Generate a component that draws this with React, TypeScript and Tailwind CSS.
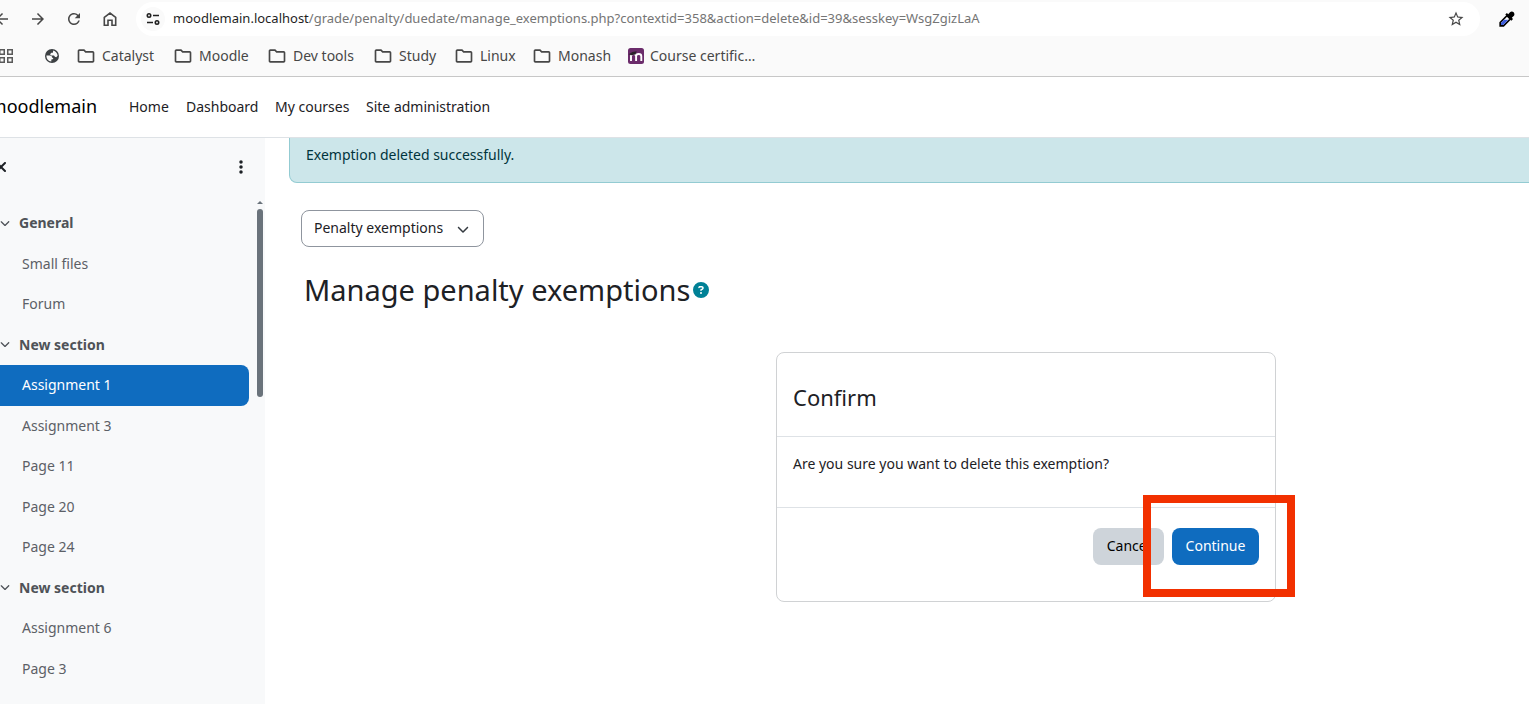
import { FaCircleQuestion, FaChevronDown, FaEllipsisVertical, FaXmark } from 'react-icons/fa6';
import { MdArrowBack, MdArrowForward, MdOutlineFolder, MdRefresh, MdStarBorder } from 'react-icons/md';

const folders = [
  { label: 'Catalyst', width: 'w-[97px]' },
  { label: 'Moodle', width: 'w-[94px]' },
  { label: 'Dev tools', width: 'w-[106px]' },
  { label: 'Study', width: 'w-[81px]' },
  { label: 'Linux', width: 'w-[78px]' },
  { label: 'Monash', width: 'w-[94px]' },
];

const navLinks = [
  { label: 'Home', width: 'w-[57px]' },
  { label: 'Dashboard', width: 'w-[89px]' },
  { label: 'My courses', width: 'w-[91px]' },
  { label: 'Site administration', width: 'w-auto' },
];

const courseIndex = [
  { label: 'General', section: true },
  { label: 'Small files' },
  { label: 'Forum' },
  { label: 'New section', section: true },
  { label: 'Assignment 1', active: true },
  { label: 'Assignment 3' },
  { label: 'Page 11' },
  { label: 'Page 20' },
  { label: 'Page 24' },
  { label: 'New section', section: true },
  { label: 'Assignment 6' },
  { label: 'Page 3' },
];

function SiteSettingsIcon() {
  return (
    <svg viewBox="0 0 14 14" className="size-[14px]" fill="none" stroke="#1f1f1f" strokeWidth="1.6" aria-hidden="true">
      <circle cx="3" cy="3.5" r="1.7" />
      <path d="M7 3.5h6M1 10.5h6" />
      <circle cx="11" cy="10.5" r="1.7" />
    </svg>
  );
}

function HomeIcon() {
  return (
    <svg viewBox="0 0 18 18" className="size-[18px]" fill="none" stroke="currentColor" strokeWidth="1.6" aria-hidden="true">
      <path d="M3.3 15.2V7.3L9 3l5.7 4.300v7.900H11V10.300H7v4.900z" />
    </svg>
  );
}

function AppsIcon() {
  return (
    <svg viewBox="0 0 14 14" className="size-[14px]" fill="none" stroke="#5a5a5a" strokeWidth="1.5" aria-hidden="true">
      <path d="M.75.75h4.500v4.500h-4.500zM8.750.75h4.500v4.500h-4.500zM.75 8.750h4.500v4.500h-4.500zM8.750 8.750h4.500v4.500h-4.500z" />
    </svg>
  );
}

function GlobeIcon() {
  return (
    <svg viewBox="0 0 14 14" className="size-[14px]" aria-hidden="true">
      <circle cx="7" cy="7" r="7" fill="#3c4043" />
      <path d="M1.400 6.600h3.300c1.700 0 2.500 1 2.500 2.200 1.500 0 1.300 1.200.500 1.400l-1.400.300v2C3.200 12.200 1.400 9.900 1.400 7z" fill="#fafafa" />
      <path d="M8.200 1.500c2.400.600 4.300 2.800 4.400 5.300l-1.400 1.500-1.300-.600-.900-1.300H6.200L5 5.200l1.400-1.400h1.500z" fill="#fafafa" />
    </svg>
  );
}

function PipetteIcon() {
  return (
    <svg viewBox="0 0 16 16" className="size-4" aria-hidden="true">
      <path d="M1.200 14.800v-3.300L8 4.700 11.300 8l-6.800 6.800z" fill="#fff" stroke="#000" strokeWidth="1.700" />
      <path d="M2 14v-2.200l3-3h4.200L4.200 14z" fill="#3b5bdb" />
      <path d="M6.300 3.600L7.900 2l1.300 1.200L11 1.300c2.400-2.400 6 1.200 3.700 3.600l-1.900 1.900L14 8.100l-1.600 1.600z" fill="#000" />
    </svg>
  );
}

function CertificateIcon() {
  return (
    <svg viewBox="0 0 16 16" className="size-4" aria-hidden="true">
      <rect width="16" height="16" rx="2.500" fill="#6b2c6b" />
      <path d="M3 13V8.300c0-3 5.100-3 5.100 0V13m0-4.700c0-3 5.200-3 5.200 0V13" fill="none" stroke="#fff" strokeWidth="1.900" />
      <path d="M.500 6.200L4.500 4l4.200-.800-1.200 3.200L3.500 7.200z" fill="#2b222b" />
    </svg>
  );
}

function BrowserBar() {
  return (
    <header className="border-b border-[#c7c7c7] bg-[#fafafa] text-[#474747]">
      <div className="flex h-[38px] items-center pr-[14px]">
        <div className="-ml-[7px] flex w-[143px] shrink-0 items-center gap-[18px]">
          <button aria-label="Back"><MdArrowBack className="size-[18px]" /></button>
          <button aria-label="Forward"><MdArrowForward className="size-[18px]" /></button>
          <button aria-label="Reload"><MdRefresh className="size-[18px]" /></button>
          <button aria-label="Home page"><HomeIcon /></button>
        </div>
        <div className="flex h-[34px] flex-1 items-center rounded-full bg-white pr-[15px] pl-[5px]">
          <button aria-label="Site information" className="flex size-6 items-center justify-center rounded-full bg-[#fafafa]">
            <SiteSettingsIcon />
          </button>
          <p className="flex-1 pl-2 text-[13px] text-[#757575]">
            <span className="text-[#1f1f1f]">moodlemain.localhost</span>
            /grade/penalty/duedate/manage_exemptions.php?contextid=358&amp;action=delete&amp;id=39&amp;sesskey=WsgZgizLaA
          </p>
          <button aria-label="Bookmark this page"><MdStarBorder className="size-[18px]" /></button>
        </div>
        <button aria-label="Colour picker" className="ml-[19px]"><PipetteIcon /></button>
      </div>
      <nav aria-label="Bookmarks" className="flex h-[38px] items-center pb-[3px] text-[14px]">
        <button aria-label="Apps" className="-ml-px w-[46px]"><AppsIcon /></button>
        <a href="#globe" aria-label="Website" className="w-[33px]"><GlobeIcon /></a>
        {folders.map((folder) => (
          <a key={folder.label} href="#folder" className={`flex shrink-0 items-center gap-[6px] whitespace-nowrap ${folder.width}`}>
            <MdOutlineFolder className="-ml-0.5 size-5 shrink-0" />
            {folder.label}
          </a>
        ))}
        <a href="#certificate" className="flex items-center gap-[6px] whitespace-nowrap">
          <CertificateIcon />
          Course certific…
        </a>
      </nav>
    </header>
  );
}

function Sidebar() {
  return (
    <aside className="flex w-[265px] shrink-0 flex-col bg-[#f8f9fa]">
      <div className="flex h-[60px] items-center justify-between pr-4 pb-0.5">
        <button aria-label="Close course index" className="-ml-[7px]"><FaXmark className="size-4" /></button>
        <button aria-label="Course index options"><FaEllipsisVertical className="size-4" /></button>
      </div>
      <div className="flex flex-1 pt-[3px]">
        <nav aria-label="Course index" className="flex w-[249px] pt-0.5 pb-[15px]">
          <ul className="grid flex-1 auto-rows-fr">
            {courseIndex.map((item, index) => (
              <li key={index} className="flex">
                {item.section ? (
                  <button className="flex flex-1 items-center gap-[9px] pb-px text-[14px] font-bold text-[#4f5358]">
                    <FaChevronDown className="size-[10px]" />
                    {item.label}
                  </button>
                ) : (
                  <a
                    href="#activity"
                    aria-current={item.active ? 'page' : undefined}
                    className={`flex flex-1 items-center pb-px pl-[22px] text-[14px] ${
                      item.active ? 'rounded-r-lg bg-[#0f6cbf] text-white' : 'text-[#5c6066]'
                    }`}
                  >
                    {item.label}
                  </a>
                )}
              </li>
            ))}
          </ul>
        </nav>
        <div aria-hidden="true" className="ml-2 flex w-[6px] flex-col gap-[5px]">
          <svg viewBox="0 0 6 3" className="h-[3px] w-[6px] shrink-0"><path d="M0 3L3 0l3 3z" fill="#6a737b" /></svg>
          <div className="h-[188px] rounded-full bg-[#6a737b]" />
        </div>
      </div>
    </aside>
  );
}

function ConfirmCard() {
  return (
    <section aria-labelledby="confirm-title" className="mx-auto mt-11 w-[500px] rounded-lg border border-[#d0d2d4]">
      <div className="flex h-[84px] items-center border-b border-[#dee2e6] px-4 pt-1">
        <h2 id="confirm-title" className="text-[22px] leading-7">Confirm</h2>
      </div>
      <p className="h-[71px] border-b border-[#dee2e6] px-4 pt-4 text-[14px] leading-[22px]">
        Are you sure you want to delete this exemption?
      </p>
      <div className="flex h-[93px] items-start justify-end gap-2 px-4 pt-5 text-[14px]">
        <button className="h-[37px] w-[71px] rounded-lg bg-[#ced4da] pb-0.5 text-black">Cancel</button>
        <div className="relative">
          <button className="h-[37px] w-[87px] rounded-lg bg-[#0f6cbf] pb-0.5 text-white">Continue</button>
          <div aria-hidden="true" className="pointer-events-none absolute -top-[33px] -right-9 -bottom-8 -left-[29px] border-8 border-[#f23000]" />
        </div>
      </div>
    </section>
  );
}

export default function App() {
  return (
    <div className="flex min-h-screen flex-col overflow-hidden bg-white font-['Noto_Sans',sans-serif] text-[#1d2125]">
      <BrowserBar />
      <div className="flex h-[61px] items-center border-b border-[#dee2e6] pb-0.5 text-[14px]">
        <a href="#site" className="flex w-[97px] justify-end text-[18px] text-black">moodlemain</a>
        <nav aria-label="Site" className="ml-8 flex">
          {navLinks.map((link) => (
            <a key={link.label} href="#nav" className={`shrink-0 whitespace-nowrap ${link.width}`}>{link.label}</a>
          ))}
        </nav>
      </div>
      <div className="flex flex-1">
        <Sidebar />
        <main className="min-w-0 flex-1 pl-6">
          <div className="-mr-[234px]">
            <div role="status" className="h-[45px] rounded-b-lg border border-t-0 border-[#93cbd2] bg-[#cce6ea] px-4 pt-[6px] text-[14px] leading-[22px] text-[#00343c]">
              Exemption deleted successfully.
            </div>
            <div className="mt-[27px] ml-3 flex">
              <div className="grid w-[183px]">
                <select
                  aria-label="Report"
                  className="col-start-1 row-start-1 h-[37px] appearance-none rounded-lg border border-[#8f959e] bg-white pb-0.5 pl-3 text-[14px]"
                >
                  <option>Penalty exemptions</option>
                </select>
                <FaChevronDown className="pointer-events-none col-start-1 row-start-1 mr-[15px] size-3 self-center justify-self-end text-[#343a40]" />
              </div>
            </div>
            <div className="mt-[23px] flex h-[38px] items-center gap-[3px] pt-0.5 pl-[15px]">
              <h1 className="text-[29px] leading-9">Manage penalty exemptions</h1>
              <button aria-label="Help with penalty exemptions"><FaCircleQuestion className="size-4 text-[#008196]" /></button>
            </div>
            <ConfirmCard />
          </div>
        </main>
      </div>
    </div>
  );
}
